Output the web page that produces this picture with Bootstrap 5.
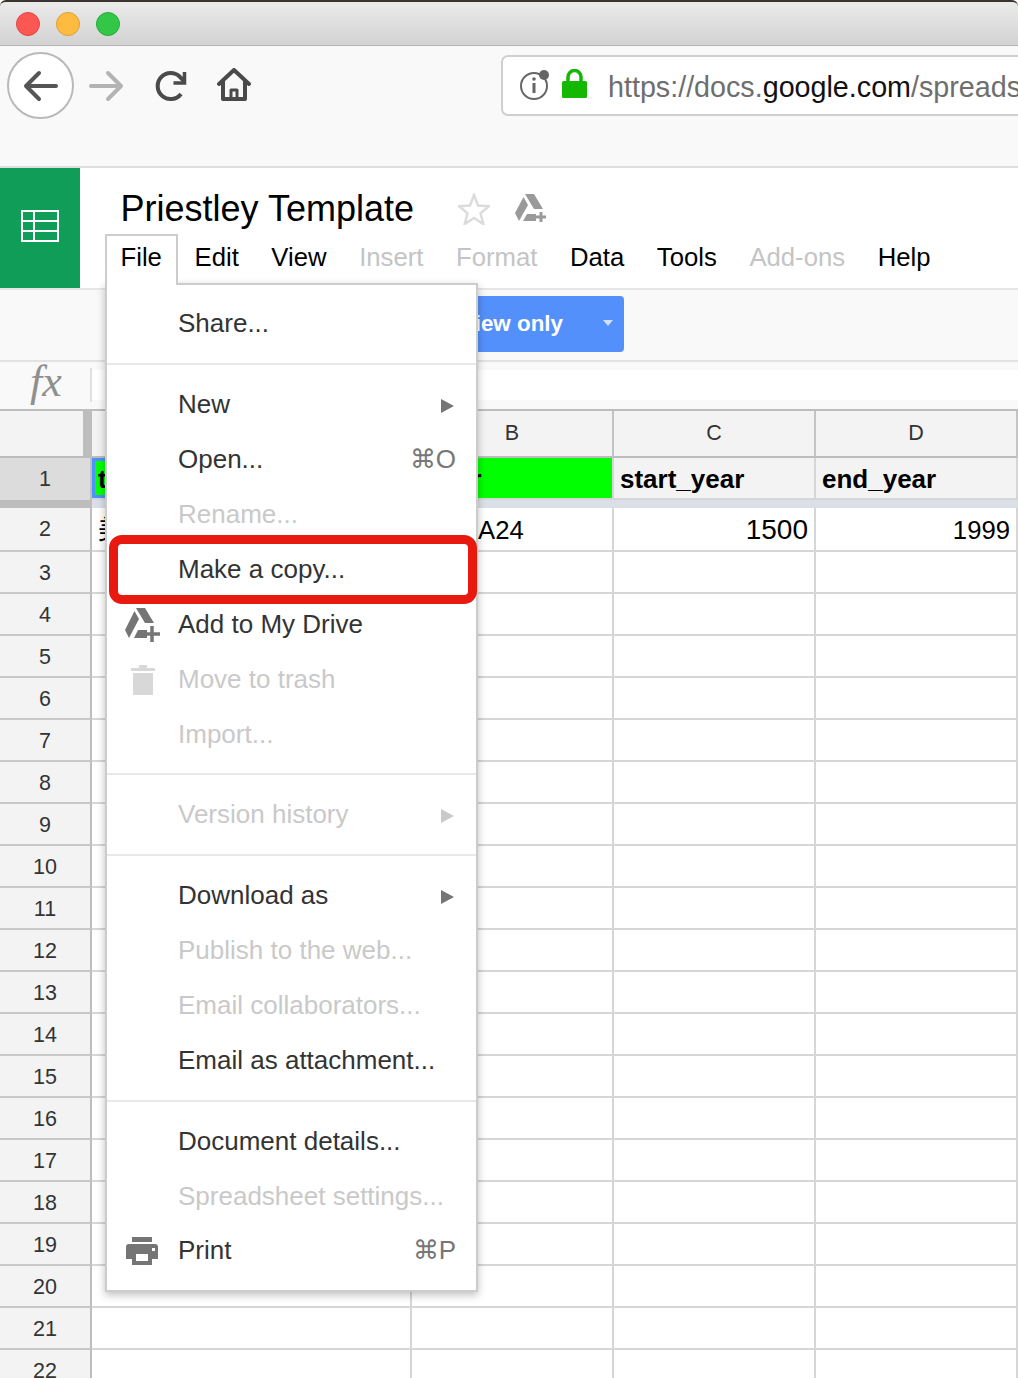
<!DOCTYPE html>
<html lang="en">
<head>
<meta charset="UTF-8">
<title>Priestley Template</title>
<link href="https://cdn.jsdelivr.net/npm/bootstrap@5.3.3/dist/css/bootstrap.min.css" rel="stylesheet">
<style>
html, body { margin: 0; height: 1378px; overflow: hidden; background: #fff; }
body { font-family: "Liberation Sans", Arial, sans-serif; color: #000; position: relative; }
svg { flex: none; }

/* browser chrome */
.title-strip { height: 46px; background: linear-gradient(to bottom, #ebebeb, #d2d2d2); border-top: 2px solid #3a3230; border-bottom: 1px solid #b4b4b4; border-radius: 6px 6px 0 0; gap: 16px; padding-left: 16px; }
.light { width: 24px; height: 24px; border-radius: 50%; }
.light-red { background: #fc5753; border: 1px solid #df4744; }
.light-yellow { background: #fdbc40; border: 1px solid #de9f34; }
.light-green { background: #33c748; border: 1px solid #27aa35; }
.browser-strip { height: 122px; background: #f9f9f9; border-bottom: 2px solid #dedede; padding: 6px 0 0 7px; }
.back-circle { width: 67px; height: 67px; flex: none; border: 2px solid #b9b9b9; border-radius: 50%; background: #fff; }
.fwd-icon { margin: 18px 0 0 14px; }
.reload-icon { margin: 18px 0 0 31px; }
.home-icon { margin: 16px 0 0 28px; }
.url-box { width: 540px; height: 61px; flex: none; margin-left: 250px; margin-top: 3px; border: 2px solid #cfcfcf; border-radius: 7px; background: #fff; padding-left: 17px; font-size: 28.7px; color: #6e6e6e; white-space: nowrap; overflow: hidden; }
.info-icon, .lock-icon { margin-bottom: 4px; }
.lock-icon { margin-left: 12px; }
.url-text { margin-left: 21px; padding-top: 4px; }
.url-dark { color: #111; }

/* docs header */
.docs-head { height: 122px; border-bottom: 2px solid #e6e6e6; }
.sheet-logo { width: 80px; height: 120px; background: #0f9d58; padding-bottom: 4px; }
.doc-title { font-size: 36px; line-height: 42px; margin: 20px 0 0 40.5px; white-space: nowrap; }
.star-icon { margin: 20px 0 0 44px; }
.drive-icon { margin: 18px 0 0 24px; }
.menu-strip { font-size: 25.7px; line-height: 30px; gap: 32.6px; margin: 12px 0 0 40.5px; white-space: nowrap; }
.file-label { position: relative; z-index: 8; }
.off { color: #c4c4c4; }
.file-tab { position: absolute; left: 105px; top: 234px; width: 73px; height: 51px; background: #fff; border: 2px solid #ccc; border-bottom: 0; z-index: 6; }

/* toolbar and formula bar */
.tool-strip { height: 72px; background: #f9f9f9; border-bottom: 2px solid #e2e2e2; padding: 6px 0 0 440px; }
.share-btn { width: 184px; height: 56px; background: #5390fb; border: 0; border-radius: 4px; color: #fff; font-weight: 700; font-size: 22.4px; padding: 0 61px 0 0; text-align: right; }
.share-caret { position: absolute; left: 603px; top: 320px; width: 0; height: 0; border: 5px solid transparent; border-top: 6px solid #cfe0fd; border-bottom: 0; }
.fx-strip { height: 47px; background: #f9f9f9; padding-top: 8px; }
.fx-cell { width: 92px; height: 30px; position: relative; }
.fx-text { position: absolute; left: 30px; top: -13px; font-family: "Liberation Serif", serif; font-style: italic; font-size: 44px; line-height: 50px; color: #8f8f8f; }
.fx-sep { position: absolute; left: 90px; top: -2px; width: 2px; height: 34px; background: #e0e0e0; }
.fx-input { flex: 1; height: 30px; background: #fff; }

/* sheet */
.sheet-row { display: flex; }
.head-row { height: 49px; border-top: 2px solid #bdbdbd; }
.row-num { width: 92px; flex: none; background: #f3f3f3; border-right: 2px solid #bdbdbd; border-bottom: 2px solid #c8c8c8; font-size: 21.5px; color: #333; display: flex; align-items: center; justify-content: center; }
.plain-row .row-num { padding-top: 2px; }
.col-letter { background: #f3f3f3; border-right: 2px solid #c4c4c4; border-bottom: 2px solid #bdbdbd; font-size: 21.5px; color: #333; display: flex; align-items: center; justify-content: center; }
.col-a { width: 320px; flex: none; }
.col-o { width: 202px; flex: none; }
.corner { width: 92px; flex: none; background: #f3f3f3; border-right: 9px solid #bdbdbd; border-bottom: 2px solid #bdbdbd; }
.cell { border-right: 2px solid #d6d6d6; border-bottom: 2px solid #d6d6d6; background: #fff; font-size: 25.7px; display: flex; align-items: center; padding: 0 6px; overflow: hidden; white-space: nowrap; }
.head-cell { background: #f3f3f3; font-weight: 700; font-size: 26px; padding-top: 2px; }
.green-cell { background: #0f0; }
.a1-cell { box-shadow: inset 0 0 0 3px #4d90fe; }
.row-one { height: 42px; }
.row-one .row-num { background: #dcdcdc; border-bottom: 0; }
.freeze { height: 8px; background: #dbdfe7; }
.freeze-left { width: 92px; background: #bdbdbd; }
.row-two { height: 44px; }
.row-two .cell { padding-top: 2px; }
.cjk-cell { font-family: "Liberation Sans", "Noto Sans CJK SC", sans-serif; }
.studio-cell { padding-left: 66px; }
.big-num { justify-content: flex-end; }
.num-large { font-size: 28px; }
.plain-row { height: 42px; }

/* file menu, drawn over the sheet */
.file-menu { position: absolute; left: 105px; top: 283px; width: 373px; height: 1009px; margin: 0; padding: 11px 0 0; border: 2px solid #ccc; border-radius: 0; background: #fff; box-shadow: 0 3px 8px rgba(0,0,0,.25); z-index: 5; font-size: 26px; }
.file-menu .dropdown-item { height: 55px; padding: 0 20px 0 71px; display: flex; align-items: center; justify-content: space-between; color: #333; position: relative; white-space: nowrap; background: none; }
.file-menu .dropdown-item.off { color: #c9c9c9; }
.file-menu .dropdown-divider { margin: 12px 0; border-top: 2px solid #e8e8e8; opacity: 1; }
.file-menu .dropdown-divider.tight { margin-top: 11px; }
.file-menu .dropdown-item.print-item { margin-top: -1px; }
.keys { color: #777; }
.sub-arrow { width: 0; height: 0; border-left: 13px solid #757575; border-top: 7px solid transparent; border-bottom: 7px solid transparent; margin: 2px 2px 0 0; }
.off .sub-arrow { border-left-color: #c9c9c9; }
.item-icon { position: absolute; left: 17px; top: 50%; transform: translateY(-50%); }
.trash-icon { left: 24px; }
.print-icon { left: 19px; }
.red-mark { position: absolute; left: 109px; top: 535px; width: 368px; height: 69px; border: 9px solid #e8190f; border-radius: 13px; z-index: 7; }
</style>
</head>
<body>

<div class="title-strip d-flex align-items-center">
  <div class="light light-red"></div>
  <div class="light light-yellow"></div>
  <div class="light light-green"></div>
</div>

<div class="browser-strip d-flex align-items-start">
  <div class="back-circle d-flex align-items-center justify-content-center">
    <svg width="36" height="32" viewBox="0 0 36 32" fill="none" stroke="#555" stroke-width="4" stroke-linecap="round" stroke-linejoin="round"><path d="M33 16H4M16 3 3 16l13 13"/></svg>
  </div>
  <svg class="fwd-icon" width="36" height="32" viewBox="0 0 36 32" fill="none" stroke="#b3b3b3" stroke-width="4" stroke-linecap="round" stroke-linejoin="round"><path d="M3 16h29M20 3l13 13-13 13"/></svg>
  <svg class="reload-icon" width="34" height="32" viewBox="0 0 34 32" fill="none" stroke="#4a4a4a" stroke-width="4"><path d="M26 24A13 13 0 1 1 25 7l4 4"/><path d="M29.500 2v11h-11" stroke-width="3.500"/></svg>
  <svg class="home-icon" width="34" height="34" viewBox="0 0 34 34" fill="none" stroke="#4a4a4a" stroke-width="4" stroke-linejoin="round" stroke-linecap="round"><path d="M2 16 17 2l15 14"/><path d="M6 14v17h22V14"/><path d="M14 31v-9h6v9" stroke-width="3"/></svg>
  <div class="url-box d-flex align-items-center">
    <svg class="info-icon" width="30" height="32" viewBox="0 0 30 32" fill="none"><circle cx="14" cy="18" r="13" stroke="#666" stroke-width="2"/><path d="M14 15v10" stroke="#666" stroke-width="3"/><circle cx="14" cy="11" r="1.800" fill="#666"/><circle cx="24" cy="7" r="5" fill="#666"/></svg>
    <svg class="lock-icon" width="25" height="30" viewBox="0 0 25 30"><path d="M6 14V8a6.500 6.500 0 0 1 13 0v6" fill="none" stroke="#14b800" stroke-width="3.500"/><rect y="12" width="25" height="17" rx="1.500" fill="#14b800"/></svg>
    <span class="url-text">https://docs.<span class="url-dark">google.com</span>/spreads</span>
  </div>
</div>

<div class="docs-head d-flex">
  <div class="sheet-logo d-flex align-items-center justify-content-center">
    <svg width="38" height="32" viewBox="0 0 38 32" fill="none" stroke="#fff" stroke-width="2"><rect x="1" y="1" width="36" height="30"/><path d="M1 11h36M1 21h36M13 1v30"/></svg>
  </div>
  <div>
    <div class="d-flex align-items-center">
      <div class="doc-title">Priestley Template</div>
      <svg class="star-icon" width="32" height="32" viewBox="0 0 32 32" fill="none" stroke="#dcdcdc" stroke-width="2.500"><path d="m16 2 4 10.500 11 .7-8.500 7 2.800 10.800L16 25l-9.300 6 2.800-10.800L1 13.200l11-.7z"/></svg>
      <svg class="drive-icon" width="34" height="30" viewBox="0 0 34 30"><path d="M11 1h9l9 15h-9zM9.500 4 14 12 5 28 1 20zM9 28l4-7h9v7z" fill="#9a9a9a"/><path d="M27 19v10M22 24h10" stroke="#9a9a9a" stroke-width="3"/></svg>
    </div>
    <div class="menu-strip d-flex">
      <span class="file-label">File</span><span>Edit</span><span>View</span><span class="off">Insert</span><span class="off">Format</span><span>Data</span><span>Tools</span><span class="off">Add-ons</span><span>Help</span>
    </div>
  </div>
</div>
<div class="file-tab"></div>

<div class="tool-strip">
  <button class="share-btn btn" type="button">View only</button>
</div>
<div class="share-caret"></div>

<div class="fx-strip d-flex">
  <div class="fx-cell"><span class="fx-text">fx</span><span class="fx-sep"></span></div>
  <div class="fx-input"></div>
</div>

<div id="sheet">
  <div class="sheet-row head-row">
    <div class="corner"></div>
    <div class="col-letter col-a">A</div>
    <div class="col-letter col-o">B</div>
    <div class="col-letter col-o">C</div>
    <div class="col-letter col-o">D</div>
  </div>
  <div class="sheet-row row-one">
    <div class="row-num">1</div>
    <div class="cell head-cell green-cell a1-cell col-a">title</div>
    <div class="cell head-cell green-cell col-o">actor</div>
    <div class="cell head-cell col-o">start_year</div>
    <div class="cell head-cell col-o">end_year</div>
  </div>
  <div class="sheet-row freeze"><div class="freeze-left"></div></div>
  <div class="sheet-row row-two">
    <div class="row-num">2</div>
    <div class="cell col-a cjk-cell">美</div>
    <div class="cell col-o studio-cell">A24</div>
    <div class="cell col-o big-num num-large">1500</div>
    <div class="cell col-o big-num">1999</div>
  </div>
</div>

<div class="red-mark"></div>

<div class="dropdown-menu show file-menu">
  <div class="dropdown-item">Share...</div>
  <div class="dropdown-divider"></div>
  <div class="dropdown-item">New<span class="sub-arrow"></span></div>
  <div class="dropdown-item">Open...<span class="keys">&#8984;O</span></div>
  <div class="dropdown-item off">Rename...</div>
  <div class="dropdown-item">Make a copy...</div>
  <div class="dropdown-item">
    <svg class="item-icon" width="36" height="36" viewBox="0 0 36 36"><path d="M12 1h9l9 15h-9zM10.500 4 15 12 5 31 1 23zM10 31l4-8h9v8z" fill="#757575"/><path d="M28 19v16M20 27h16" stroke="#757575" stroke-width="3.500"/></svg>
    Add to My Drive
  </div>
  <div class="dropdown-item off">
    <svg class="item-icon trash-icon" width="24" height="30" viewBox="0 0 24 30" fill="#d8d8d8"><path d="M0 3h8V0h8v3h8v3H0zM2 8h20v22H2z"/></svg>
    Move to trash
  </div>
  <div class="dropdown-item off">Import...</div>
  <div class="dropdown-divider tight"></div>
  <div class="dropdown-item off">Version history<span class="sub-arrow"></span></div>
  <div class="dropdown-divider"></div>
  <div class="dropdown-item">Download as<span class="sub-arrow"></span></div>
  <div class="dropdown-item off">Publish to the web...</div>
  <div class="dropdown-item off">Email collaborators...</div>
  <div class="dropdown-item">Email as attachment...</div>
  <div class="dropdown-divider"></div>
  <div class="dropdown-item">Document details...</div>
  <div class="dropdown-item off">Spreadsheet settings...</div>
  <div class="dropdown-item print-item">
    <svg class="item-icon print-icon" width="32" height="28" viewBox="0 0 32 28" fill="#757575"><path d="M6 0h20v5H6z"/><path fill-rule="evenodd" d="M3 7h26a3 3 0 0 1 3 3v12h-6v6H6v-6H0V10a3 3 0 0 1 3-3zm7 10v7h12v-7zm16-6v3h3v-3z"/></svg>
    Print<span class="keys">&#8984;P</span>
  </div>
</div>

<script>
// rows 3 to 22 are all empty
const sheet = document.getElementById('sheet');
for (let n = 3; n <= 22; n++) {
  sheet.insertAdjacentHTML('beforeend',
    `<div class="sheet-row plain-row"><div class="row-num">${n}</div><div class="cell col-a"></div><div class="cell col-o"></div><div class="cell col-o"></div><div class="cell col-o"></div></div>`);
}
</script>
<script src="https://cdn.jsdelivr.net/npm/bootstrap@5.3.3/dist/js/bootstrap.bundle.min.js"></script>
</body>
</html>
